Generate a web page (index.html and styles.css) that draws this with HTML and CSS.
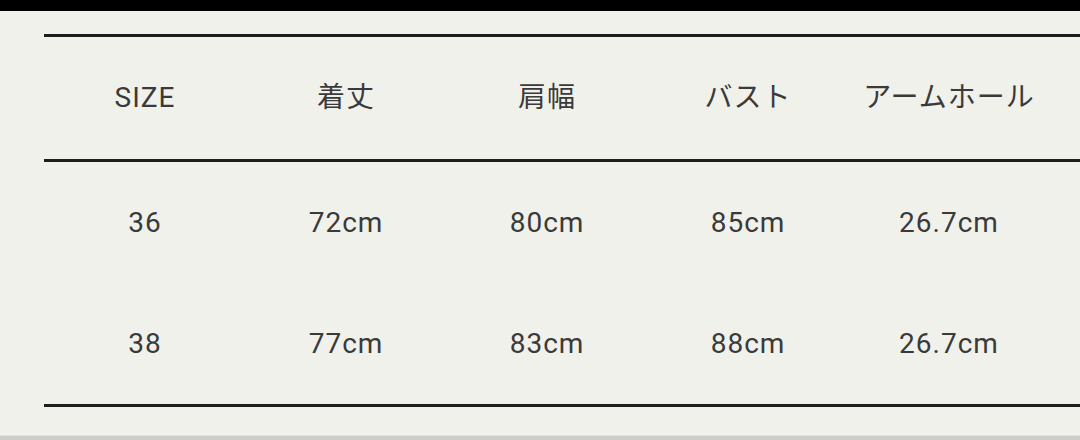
FILE: index.html
```html
<!DOCTYPE html>
<html lang="ja">
<head>
<meta charset="utf-8">
<link rel="stylesheet" href="styles.css">
</head>
<body>
<div class="topbar"></div>
<div class="page">
  <div class="table">
    <div class="row head">
      <div class="cell">SIZE</div>
      <div class="cell">着丈</div>
      <div class="cell">肩幅</div>
      <div class="cell">バスト</div>
      <div class="cell">アームホール</div>
    </div>
    <div class="row body first">
      <div class="cell">36</div>
      <div class="cell">72cm</div>
      <div class="cell">80cm</div>
      <div class="cell">85cm</div>
      <div class="cell">26.7cm</div>
    </div>
    <div class="row body">
      <div class="cell">38</div>
      <div class="cell">77cm</div>
      <div class="cell">83cm</div>
      <div class="cell">88cm</div>
      <div class="cell">26.7cm</div>
    </div>
  </div>
</div>
<div class="bottombar"></div>
</body>
</html>
```

FILE: styles.css
```css
html, body {
  margin: 0;
  padding: 0;
}
body {
  width: 1080px;
  height: 440px;
  overflow: hidden;
  background: #f1f1ec;
  font-family: "Roboto", "Noto Sans CJK JP", sans-serif;
  color: #3a3a3a;
  display: flex;
  flex-direction: column;
}
.topbar {
  height: 11px;
  background: #000;
}
.page {
  flex: 1;
  padding: 23px 0 0 44px;
}
.table {
  border-top: 3px solid #1e1e1e;
  border-bottom: 3px solid #1e1e1e;
}
.row {
  display: grid;
  grid-template-columns: repeat(5, 201px) 1fr;
  align-items: center;
  font-size: 28px;
  line-height: 1;
  letter-spacing: 1px;
}
.row.head {
  height: 122px;
}
.row.first {
  border-top: 3px solid #1e1e1e;
}
.row.body {
  height: 121px;
}
.cell {
  text-align: center;
  padding-left: 1px;
}
.bottombar {
  height: 4px;
  background: #cdcdc9;
  border-top: 1px solid #e2e2de;
}
```
